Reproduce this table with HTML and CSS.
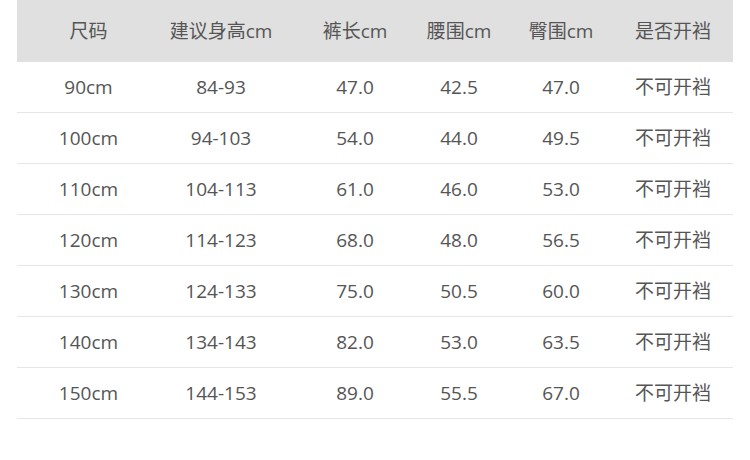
FILE: index.html
```html
<!DOCTYPE html>
<html lang="zh">
<head>
<meta charset="utf-8">
<link rel="stylesheet" href="styles.css">
</head>
<body>
<div class="table">
  <div class="row head">
    <div class="cell">尺码</div>
    <div class="cell">建议身高cm</div>
    <div class="cell">裤长cm</div>
    <div class="cell">腰围cm</div>
    <div class="cell">臀围cm</div>
    <div class="cell">是否开裆</div>
  </div>
  <div class="row"><div class="cell">90cm</div><div class="cell">84-93</div><div class="cell">47.0</div><div class="cell">42.5</div><div class="cell">47.0</div><div class="cell">不可开裆</div></div>
  <div class="row"><div class="cell">100cm</div><div class="cell">94-103</div><div class="cell">54.0</div><div class="cell">44.0</div><div class="cell">49.5</div><div class="cell">不可开裆</div></div>
  <div class="row"><div class="cell">110cm</div><div class="cell">104-113</div><div class="cell">61.0</div><div class="cell">46.0</div><div class="cell">53.0</div><div class="cell">不可开裆</div></div>
  <div class="row"><div class="cell">120cm</div><div class="cell">114-123</div><div class="cell">68.0</div><div class="cell">48.0</div><div class="cell">56.5</div><div class="cell">不可开裆</div></div>
  <div class="row"><div class="cell">130cm</div><div class="cell">124-133</div><div class="cell">75.0</div><div class="cell">50.5</div><div class="cell">60.0</div><div class="cell">不可开裆</div></div>
  <div class="row"><div class="cell">140cm</div><div class="cell">134-143</div><div class="cell">82.0</div><div class="cell">53.0</div><div class="cell">63.5</div><div class="cell">不可开裆</div></div>
  <div class="row"><div class="cell">150cm</div><div class="cell">144-153</div><div class="cell">89.0</div><div class="cell">55.5</div><div class="cell">67.0</div><div class="cell">不可开裆</div></div>
</div>
</body>
</html>
```
FILE: styles.css
```css
html, body {
  margin: 0;
  padding: 0;
  background: #ffffff;
}
body {
  width: 750px;
  height: 460px;
  overflow: hidden;
  font-family: "Open Sans", "Noto Sans CJK SC", sans-serif;
  font-size: 19px;
  color: #555555;
}
.table {
  margin-left: 17px;
  width: 716px;
}
.row {
  display: grid;
  grid-template-columns: 143px 122px 146px 62px 142px 82px 19px;
  align-items: center;
  height: 50px;
  border-bottom: 1px solid #e6e6e6;
}
.row.head {
  height: 62px;
  border-bottom: none;
  background: #e0e0e0;
}
.cell {
  justify-self: center;
  white-space: nowrap;
  line-height: 1;
}
```
